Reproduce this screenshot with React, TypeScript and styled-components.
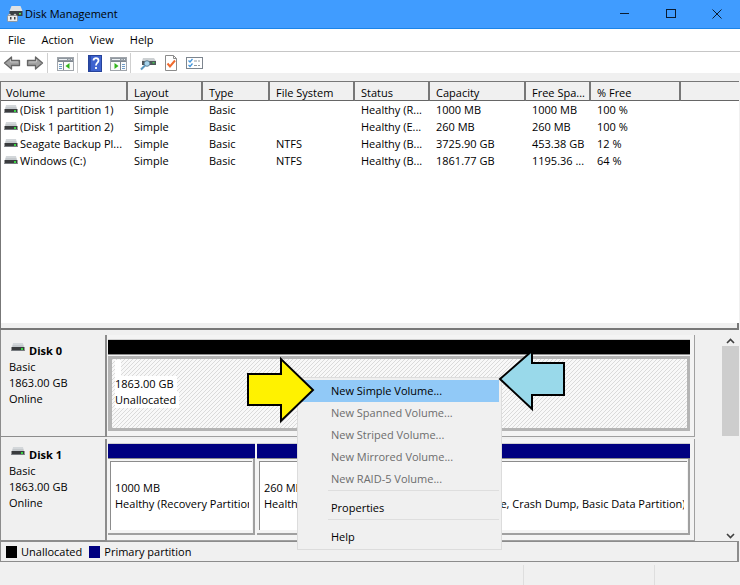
import React from 'react';
import styled, { createGlobalStyle, css } from 'styled-components';

const GlobalStyle = createGlobalStyle`
  *, *::before, *::after { box-sizing: border-box; }
  body {
    margin: 0;
    background: #f0f0f0;
    color: #000;
    font: 11px/16px "Open Sans", "Noto Sans", sans-serif;
  }
  button { font: inherit; color: inherit; background: none; border: 0; padding: 0; margin: 0; }
  svg { display: block; }
`;

const Window = styled.div`
  min-height: 100vh;
  display: flex;
  flex-direction: column;
  background: #f0f0f0;
`;

const TitleBar = styled.header`
  height: 29px;
  flex: none;
  display: flex;
  align-items: center;
  gap: 1px;
  padding-left: 6px;
  background: #409cff;
  border-bottom: 1px solid #1b84e8;
`;

const Title = styled.h1`
  flex: 1;
  margin: 0;
  font-size: 11px;
  font-weight: 400;
`;

const CaptionButtons = styled.div`
  display: flex;
`;

const CaptionButton = styled.button`
  width: 46px;
  height: 26px;
  display: grid;
  place-items: center;
`;

const MenuBar = styled.nav`
  height: 23px;
  flex: none;
  display: flex;
  gap: 16px;
  padding: 0 0 0 8px;
  background: #fff;
  border-bottom: 1px solid #c6c6c6;
`;

const ToolBar = styled.div`
  height: 21px;
  flex: none;
  display: flex;
  align-items: center;
  gap: 1px;
  padding: 1px 0 0 1px;
  background: #fff;
`;

const ToolButton = styled.button`
  width: 22px;
  height: 20px;
  display: grid;
  place-items: center;
`;

const ToolDivider = styled.span`
  width: 1px;
  height: 20px;
  margin-right: 5px;
  background: #cfcfcf;
`;

const VolumePane = styled.section`
  flex: 1;
  min-height: 240px;
  margin: 8px 1px 0 0;
  display: flex;
  flex-direction: column;
  background: #fff;
  border: 1px solid #777;
  border-width: 1px 0 0 1px;
`;

const VolumeTable = styled.table`
  width: 100%;
  table-layout: fixed;
  border-collapse: separate;
  border-spacing: 0;

  th, td {
    padding: 0 0 0 6px;
    text-align: left;
    font-weight: 400;
    white-space: nowrap;
    overflow: hidden;
    text-overflow: ellipsis;
  }
  th {
    height: 19px;
    padding-top: 3px;
    line-height: 15px;
    background: #f0f0f0;
    border-right: 2px solid #777;
    border-bottom: 1px solid #666;
  }
  th:first-child { padding-left: 5px; }
  th:last-child { border-right: 0; }
  td { height: 17px; line-height: 16px; }
  td:first-child { padding-left: 3px; }
`;

const Col = styled.col<{ $w?: number }>`
  width: ${(p) => (p.$w ? `${p.$w}px` : 'auto')};
`;

const VolumeName = styled.span`
  display: flex;
  align-items: center;
  gap: 2px;
  svg { flex: none; }
`;

const Splitter = styled.div`
  height: 7px;
  flex: none;
  margin-right: 1px;
  background: #f0f0f0;
  border: 1px solid #777;
  border-width: 0 2px 2px 1px;
`;

const DiskView = styled.section`
  position: relative;
  flex: none;
  display: flex;
  justify-content: space-between;
  padding: 5px 1px 0 0;
  border-left: 1px solid #8c8c8c;
`;

const DiskList = styled.div`
  flex: 1;
  min-width: 0;
  display: flex;
  flex-direction: column;
  gap: 2px;
  margin-right: 27px;
`;

const DiskRow = styled.article`
  height: 102px;
  display: flex;
`;

const DiskInfo = styled.div`
  width: 106px;
  flex: none;
  padding: 8px 8px 0;
  border: 1px solid #8c8c8c;
  border-width: 0 2px 1px 0;
  p { margin: 0; }
`;

const DiskName = styled.h2`
  display: flex;
  gap: 4px;
  margin: 0;
  padding-left: 2px;
  font-size: 11px;
  font-weight: 700;
`;

const Partitions = styled.div`
  flex: 1;
  min-width: 0;
  display: flex;
  gap: 2px;
  padding: 4px 4px 5px 1px;
  background: #f4f4f4;
  border: 1px solid #a0a0a0;
  border-width: 0 1px 1px 0;
`;

const Partition = styled.div<{ $w?: number }>`
  ${(p) => (p.$w ? css`width: ${p.$w}px; flex: none;` : css`flex: 1; min-width: 0;`)}
  display: flex;
  flex-direction: column;
`;

const PartitionBar = styled.div<{ $color: string }>`
  height: 16px;
  flex: none;
  background: ${(p) => p.$color};
  border-top: 1px solid #d0d0d0;
  border-bottom: 1px solid #8c8c8c;
`;

const PartitionBody = styled.div<{ $unallocated?: boolean }>`
  flex: 1;
  overflow: hidden;
  white-space: nowrap;
  ${(p) =>
    p.$unallocated
      ? css`
          padding: 1px 4px 0 3px;
          margin-top: 1px;
          border: 3px solid #b4b4b4;
          border-left-width: 4px;
          background: linear-gradient(135deg, #dadada 12.5%, #f8f8f8 12.5% 50%, #dadada 50% 62.5%, #f8f8f8 62.5%) 0 0 / 4px 4px;
        `
      : css`
          padding: 2px 1px 3px 2px;
          background: #f4f4f4;
          border-right: 2px solid #a0a0a0;
          border-bottom: 2px solid #a0a0a0;
        `}
`;

const PartitionFace = styled.div`
  height: 100%;
  overflow: hidden;
  padding: 2px 3px 0 4px;
  background: #fff;
  border: 1px solid #8c8c8c;
  border-width: 1px 0 0 1px;
`;

const PartitionText = styled.div<{ $backed?: boolean }>`
  min-height: 16px;
  overflow: hidden;
  ${(p) =>
    p.$backed &&
    css`
      width: max-content;
      min-width: 6px;
      padding-right: 3px;
      background: #fff;
    `}
`;

const ScrollTrack = styled.div`
  width: 17px;
  flex: none;
  display: flex;
  flex-direction: column;
`;

const ScrollButton = styled.button`
  height: 11px;
  display: grid;
  place-items: center;
`;

const ScrollThumb = styled.div`
  height: 90px;
  margin-bottom: auto;
  background: #cdcdcd;
`;

const Legend = styled.footer`
  height: 21px;
  flex: none;
  display: flex;
  align-items: center;
  gap: 4px;
  margin-right: 1px;
  padding-left: 5px;
  border: 1px solid #8c8c8c;
  border-right-width: 2px;
`;

const Swatch = styled.span<{ $color: string }>`
  width: 11px;
  height: 12px;
  background: ${(p) => p.$color};
`;

const LegendLabel = styled.span`
  margin-right: 3px;
`;

const StatusBar = styled.div`
  height: 23px;
  flex: none;
  display: flex;
  justify-content: flex-end;
  padding-top: 3px;
`;

const StatusCell = styled.span<{ $w: number }>`
  width: ${(p) => p.$w}px;
  border-left: 1px solid #dedede;
`;

const ContextMenu = styled.div`
  position: absolute;
  left: 296px;
  top: 47px;
  width: 205px;
  padding: 2px 2px 1px;
  background: #f0f0f0;
  border: 1px solid #dcdcdc;
`;

const MenuItem = styled.button<{ $active?: boolean }>`
  display: block;
  width: 100%;
  height: 22px;
  padding-left: 31px;
  text-align: left;
  background: ${(p) => (p.$active ? '#91c9f7' : 'transparent')};
  &:disabled { color: #6d6d6d; }
`;

const MenuRule = styled.hr`
  margin: 0 0 6px 28px;
  border: 0;
  border-top: 1px solid #dedede;
`;

const Callout = styled.svg<{ $x: number; $y: number }>`
  position: absolute;
  left: ${(p) => p.$x}px;
  top: ${(p) => p.$y}px;
`;

const DriveIcon = () => (
  <svg width="14" height="10" viewBox="0 0 14 10" aria-hidden="true">
    <path d="M2 0h10l1 4H1z" fill="#d3d7da" />
    <path d="M1.500 3h11" stroke="#b4b9bd" />
    <rect x="0.500" y="4" width="13" height="4" fill="#3a3c3e" />
    <rect x="0.500" y="7" width="13" height="1" fill="#777b80" />
    <rect x="10" y="5" width="2" height="2" fill="#39d543" />
  </svg>
);

const AppIcon = () => (
  <svg width="18" height="18" viewBox="0 0 18 18" aria-hidden="true">
    <path d="M5.500 1h9l2 5h-13z" fill="#dfe2e4" />
    <path d="M3.500 6h13v5h-13z" fill="#3c4043" />
    <path d="M13 8h2v1.500h-2z" fill="#4be357" />
    <path d="M2.500 9h2v2h-2zM8 9h2v2H8z" fill="#f2f2f2" stroke="#8b8b8b" strokeWidth=".5" />
    <rect x="1.500" y="10.500" width="10" height="6" rx="1" fill="#ececec" stroke="#8b8b8b" strokeWidth=".8" />
    <path d="M4 12h1.500v2.500H4zM8 12h1.500v2.500H8z" fill="#464646" />
  </svg>
);

const ArrowIcon = ({ forward }: { forward?: boolean }) => (
  <svg width="18" height="16" viewBox="0 0 18 16" aria-hidden="true">
    <path
      d={forward ? 'M1.500 5.500h8V2l7 6-7 6v-3.500h-8z' : 'M16.500 5.500h-8V2l-7 6 7 6v-3.500h8z'}
      fill="#a2a2a2"
      stroke="#666"
      strokeWidth="1.300"
      strokeLinejoin="round"
    />
    <path d={forward ? 'M3 7h7.500V4.500' : 'M15 7H7.500V4.500'} fill="none" stroke="#c4c4c4" />
  </svg>
);

const PaneIcon = ({ right }: { right?: boolean }) => (
  <svg width="17" height="15" viewBox="0 0 17 15" aria-hidden="true">
    <rect x=".5" y="1.500" width="16" height="13" fill="#fafbfb" stroke="#a0a5ab" />
    <rect x="1" y="2" width="15" height="3" fill="#8f979f" />
    <path d="M2 3.500h8M11.500 3.500h1M14 3.500h1" stroke="#eef2f5" />
    <path d={right ? 'M1 5.500h15M10.500 5v9' : 'M1 5.500h15M6.500 5v9'} stroke="#7d868f" />
    <path d={right ? 'M12 8.500h3M12 10.500h3M12 12.500h3' : 'M2 8.500h3M2 10.500h3M2 12.500h3'} stroke="#6f9cc8" />
    <path d={right ? 'M4.500 7 8.500 10l-4 3z' : 'M12.500 7l-4 3 4 3z'} fill="#32b51c" />
  </svg>
);

const HelpIcon = () => (
  <svg width="14" height="17" viewBox="0 0 14 17" aria-hidden="true">
    <rect x=".5" y=".5" width="13" height="16" fill="#3f63cf" stroke="#26439a" />
    <path d="M1 1h2v15H1z" fill="#2b4aa8" />
    <path d="M5.500 5.500c0-3.300 5-3.300 5 0 0 2.200-2.500 2.200-2.500 5M8 12v2" fill="none" stroke="#fff" strokeWidth="1.800" />
  </svg>
);

const DriveSearchIcon = () => (
  <svg width="17" height="16" viewBox="0 0 17 16" aria-hidden="true">
    <path d="M3 3h11l2 3H2z" fill="#cdd1d3" />
    <path d="M2 6h14v4H2z" fill="#50575b" />
    <path d="M12.500 7h2v1.500h-2z" fill="#45c655" />
    <circle cx="7" cy="8.500" r="2.800" fill="#a8d4ec" stroke="#5f8196" />
    <path d="m5 10.500-4 4" stroke="#5a98c0" strokeWidth="2" />
  </svg>
);

const CheckPageIcon = () => (
  <svg width="14" height="16" viewBox="0 0 14 16" aria-hidden="true">
    <path d="M1.500.5h8l3 3v12h-11z" fill="#fff" stroke="#8b8b8b" />
    <path d="M9.500.5v3h3" fill="none" stroke="#8b8b8b" />
    <path d="m3.500 8.500 2.500 3 5-6" fill="none" stroke="#f06a2d" strokeWidth="2" />
  </svg>
);

const ListIcon = () => (
  <svg width="17" height="14" viewBox="0 0 17 14" aria-hidden="true">
    <rect x=".5" y="1.500" width="16" height="11" fill="#fff" stroke="#7d858e" />
    <path d="m2.500 4.500 1.500 1.500 2.500-3M2.500 9 4 10.500 6.500 7.500" fill="none" stroke="#4496dc" strokeWidth="1.300" />
    <path d="M8 5h3M12 5h2M8 9.500h3M12 9.500h2" stroke="#9299a0" />
  </svg>
);

const Chevron = ({ down }: { down?: boolean }) => (
  <svg width="9" height="6" viewBox="0 0 9 6" aria-hidden="true">
    <path d={down ? 'm1 1 3.500 3.500L8 1' : 'm1 5 3.500-3.500L8 5'} fill="none" stroke="#404040" strokeWidth="1.600" />
  </svg>
);

const headings = ['Volume', 'Layout', 'Type', 'File System', 'Status', 'Capacity', 'Free Spa...', '% Free', ''];
const columnWidths = [127, 75, 67, 85, 75, 96, 65, 90, undefined];

const volumes = [
  ['(Disk 1 partition 1)', 'Simple', 'Basic', '', 'Healthy (R...', '1000 MB', '1000 MB', '100 %', ''],
  ['(Disk 1 partition 2)', 'Simple', 'Basic', '', 'Healthy (E...', '260 MB', '260 MB', '100 %', ''],
  ['Seagate Backup Pl...', 'Simple', 'Basic', 'NTFS', 'Healthy (B...', '3725.90 GB', '453.38 GB', '12 %', ''],
  ['Windows (C:)', 'Simple', 'Basic', 'NTFS', 'Healthy (B...', '1861.77 GB', '1195.36 ...', '64 %', ''],
];

const volumeActions = ['New Spanned Volume...', 'New Striped Volume...', 'New Mirrored Volume...', 'New RAID-5 Volume...'];

const DiskSummary = ({ name }: { name: string }) => (
  <DiskInfo>
    <DiskName><DriveIcon />{name}</DiskName>
    <p>Basic</p>
    <p>1863.00 GB</p>
    <p>Online</p>
  </DiskInfo>
);

const PrimaryPartition = ({ width, size, status }: { width?: number; size: string; status: string }) => (
  <Partition $w={width}>
    <PartitionBar $color="#000080" />
    <PartitionBody>
      <PartitionFace>
        <PartitionText />
        <PartitionText>{size}</PartitionText>
        <PartitionText>{status}</PartitionText>
      </PartitionFace>
    </PartitionBody>
  </Partition>
);

export default function App() {
  return (
    <Window>
      <GlobalStyle />
      <TitleBar>
        <AppIcon />
        <Title>Disk Management</Title>
        <CaptionButtons>
          <CaptionButton aria-label="Minimize">
            <svg width="10" height="10" viewBox="0 0 10 10"><path d="M0 4.500h9" stroke="#0b1c30" /></svg>
          </CaptionButton>
          <CaptionButton aria-label="Maximize">
            <svg width="10" height="10" viewBox="0 0 10 10"><rect x=".5" y=".5" width="9" height="8" fill="none" stroke="#0b1c30" /></svg>
          </CaptionButton>
          <CaptionButton aria-label="Close">
            <svg width="10" height="10" viewBox="0 0 10 10"><path d="m.5.5 9 9m0-9-9 9" stroke="#0b1c30" /></svg>
          </CaptionButton>
        </CaptionButtons>
      </TitleBar>
      <MenuBar>
        {['File', 'Action', 'View', 'Help'].map((m) => <button key={m}>{m}</button>)}
      </MenuBar>
      <ToolBar>
        <ToolButton aria-label="Back"><ArrowIcon /></ToolButton>
        <ToolButton aria-label="Forward"><ArrowIcon forward /></ToolButton>
        <ToolDivider />
        <ToolButton aria-label="Show console tree"><PaneIcon /></ToolButton>
        <ToolDivider />
        <ToolButton aria-label="Help"><HelpIcon /></ToolButton>
        <ToolButton aria-label="Show action pane"><PaneIcon right /></ToolButton>
        <ToolDivider />
        <ToolButton aria-label="Rescan disks"><DriveSearchIcon /></ToolButton>
        <ToolButton aria-label="Properties"><CheckPageIcon /></ToolButton>
        <ToolButton aria-label="Settings"><ListIcon /></ToolButton>
      </ToolBar>

      <VolumePane>
        <VolumeTable>
          <colgroup>{columnWidths.map((w, i) => <Col key={i} $w={w} />)}</colgroup>
          <thead>
            <tr>{headings.map((h, i) => <th key={i}>{h}</th>)}</tr>
          </thead>
          <tbody>
            {volumes.map((row) => (
              <tr key={row[0]}>
                {row.map((cell, i) => (
                  <td key={i}>{i === 0 ? <VolumeName><DriveIcon />{cell}</VolumeName> : cell}</td>
                ))}
              </tr>
            ))}
          </tbody>
        </VolumeTable>
      </VolumePane>
      <Splitter />

      <DiskView>
        <DiskList>
          <DiskRow>
            <DiskSummary name="Disk 0" />
            <Partitions>
              <Partition>
                <PartitionBar $color="#000" />
                <PartitionBody $unallocated>
                  <PartitionText $backed />
                  <PartitionText $backed>1863.00 GB</PartitionText>
                  <PartitionText $backed>Unallocated</PartitionText>
                </PartitionBody>
              </Partition>
            </Partitions>
          </DiskRow>
          <DiskRow>
            <DiskSummary name="Disk 1" />
            <Partitions>
              <PrimaryPartition width={147} size="1000 MB" status="Healthy (Recovery Partition)" />
              <PrimaryPartition width={120} size="260 MB" status="Healthy (EFI System Partition)" />
              <PrimaryPartition size="1861.77 GB NTFS" status="Healthy (Boot, Page File, Crash Dump, Basic Data Partition)" />
            </Partitions>
          </DiskRow>
        </DiskList>
        <ScrollTrack>
          <ScrollButton aria-label="Scroll up"><Chevron /></ScrollButton>
          <ScrollThumb />
          <ScrollButton aria-label="Scroll down"><Chevron down /></ScrollButton>
        </ScrollTrack>

        <ContextMenu role="menu">
          <MenuItem role="menuitem" $active>New Simple Volume...</MenuItem>
          {volumeActions.map((a) => <MenuItem key={a} role="menuitem" disabled>{a}</MenuItem>)}
          <MenuRule />
          <MenuItem role="menuitem">Properties</MenuItem>
          <MenuRule />
          <MenuItem role="menuitem">Help</MenuItem>
        </ContextMenu>
        <Callout $x={245} $y={26} width="72" height="68" viewBox="0 0 72 68" aria-hidden="true">
          <path d="M2 18h33V3l32 31-32 31V49H2z" fill="#fff200" stroke="#000" strokeWidth="2" />
        </Callout>
        <Callout $x={497} $y={18} width="70" height="66" viewBox="0 0 70 66" aria-hidden="true">
          <path d="M66 15H34V3L2 31l32 30V47h32z" fill="#99d9ea" stroke="#000" strokeWidth="2" />
        </Callout>
      </DiskView>

      <Legend>
        <Swatch $color="#000" />
        <LegendLabel>Unallocated</LegendLabel>
        <Swatch $color="#000080" />
        <LegendLabel>Primary partition</LegendLabel>
      </Legend>
      <StatusBar>
        <StatusCell $w={131} />
        <StatusCell $w={86} />
      </StatusBar>
    </Window>
  );
}
